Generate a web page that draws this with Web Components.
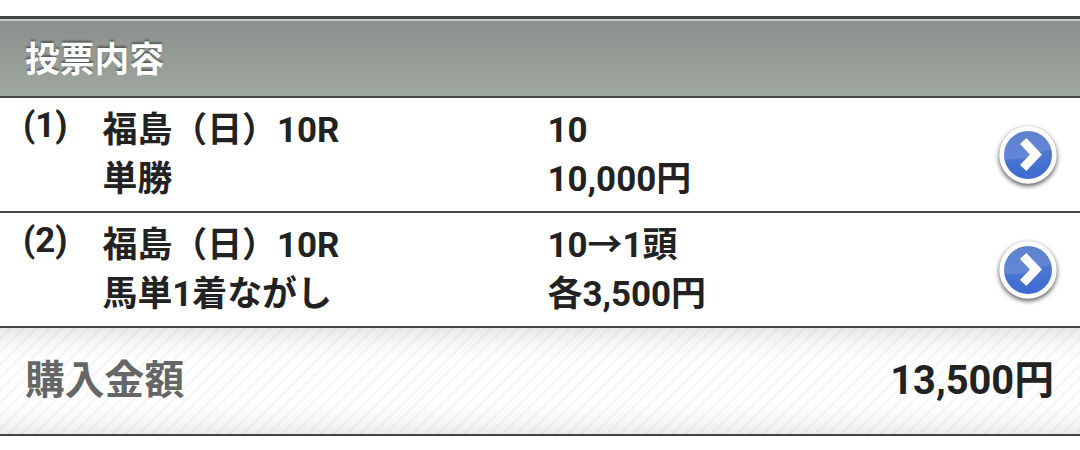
<!DOCTYPE html>
<html lang="ja">
<head>
<meta charset="utf-8">
<title>投票内容</title>
<style>
  body {
    margin: 0;
    padding-top: 16px;
    background: #fff;
    color: #222;
    font-family: Roboto, "Noto Sans CJK JP", sans-serif;
    font-weight: 700;
  }
</style>
</head>
<body>
<section-title>投票内容</section-title>
<bet-row number="(1)">
  <span slot="race">福島（日）10R</span>
  <span slot="type">単勝</span>
  <span slot="pick">10</span>
  <span slot="amount">10,000円</span>
</bet-row>
<bet-row number="(2)">
  <span slot="race">福島（日）10R</span>
  <span slot="type">馬単1着ながし</span>
  <span slot="pick">10→1頭</span>
  <span slot="amount">各3,500円</span>
</bet-row>
<total-bar label="購入金額">13,500円</total-bar>

<script>
class SectionTitle extends HTMLElement {
  constructor() {
    super();
    this.attachShadow({ mode: 'open' });
  }

  connectedCallback() {
    this.shadowRoot.innerHTML = `
      <style>
        :host {
          display: block;
          box-sizing: border-box;
          height: 82px;
          padding: 0 25px;
          border-top: 3px solid #444;
          border-bottom: 2px solid #444;
          background: linear-gradient(#c8cdca 2px, #8a918c 2px, #9fa7a1);
          font-size: 34.8px;
          line-height: 82px;
          color: #fff;
          text-shadow: 0 -2px 2px rgba(0, 0, 0, 0.4);
        }
      </style>
      <slot></slot>
    `;
  }
}

class ArrowIcon extends HTMLElement {
  constructor() {
    super();
    this.attachShadow({ mode: 'open' });
  }

  connectedCallback() {
    this.shadowRoot.innerHTML = `
      <style>
        :host {
          display: block;
          width: 70px;
          height: 70px;
        }

        svg {
          display: block;
        }

        .ring {
          filter: drop-shadow(0 2px 2.5px rgba(0, 0, 0, 0.7));
        }
      </style>
      <svg width="70" height="70" viewBox="0 0 70 70">
        <defs>
          <linearGradient id="base" x1="0" y1="0" x2="0" y2="1">
            <stop offset="0" stop-color="#587dcb"/>
            <stop offset="0.5" stop-color="#4c76d0"/>
            <stop offset="1" stop-color="#3d69d2"/>
          </linearGradient>
          <linearGradient id="gloss" x1="0" y1="0" x2="0" y2="1">
            <stop offset="0" stop-color="#fff" stop-opacity="0"/>
            <stop offset="1" stop-color="#fff" stop-opacity="0.14"/>
          </linearGradient>
          <clipPath id="disc"><circle cx="35" cy="35" r="24"/></clipPath>
        </defs>
        <circle class="ring" cx="35" cy="35" r="28.7" fill="#fff"/>
        <circle cx="35" cy="35" r="24" fill="url(#base)"/>
        <path d="M0 0H70V28Q54 29 40 35Q26 41 0 39Z" fill="url(#gloss)" clip-path="url(#disc)"/>
        <path d="M30.2 21L42.9 34.5L30.2 48" fill="none" stroke="#fff" stroke-width="8.8"/>
      </svg>
    `;
  }
}

class BetRow extends HTMLElement {
  constructor() {
    super();
    this.attachShadow({ mode: 'open' });
  }

  connectedCallback() {
    this.shadowRoot.innerHTML = `
      <style>
        :host {
          display: grid;
          grid-template-columns: 79.5px 445px 1fr 70px;
          box-sizing: border-box;
          height: 115px;
          padding: 8px 17px 0 23px;
          border-bottom: 2px solid #444;
          font-size: 34.9px;
          line-height: 49px;
        }

        .number {
          margin-top: -5px;
        }

        .lines {
          display: grid;
          grid-template-rows: 49px 49px;
        }

        arrow-icon {
          margin-top: 14px;
        }
      </style>
      <div class="number">${this.getAttribute('number')}</div>
      <div class="lines"><slot name="race"></slot><slot name="type"></slot></div>
      <div class="lines"><slot name="pick"></slot><slot name="amount"></slot></div>
      <arrow-icon></arrow-icon>
    `;
  }
}

class TotalBar extends HTMLElement {
  constructor() {
    super();
    this.attachShadow({ mode: 'open' });
  }

  connectedCallback() {
    this.shadowRoot.innerHTML = `
      <style>
        :host {
          display: flex;
          justify-content: space-between;
          box-sizing: border-box;
          height: 108px;
          padding: 0 26px 0 25px;
          border-bottom: 2px solid #444;
          background:
            linear-gradient(rgba(0, 0, 0, 0.09), rgba(0, 0, 0, 0.03) 14%, transparent 32%, transparent 70%, rgba(0, 0, 0, 0.03) 88%, rgba(0, 0, 0, 0.08)),
            repeating-linear-gradient(135deg, #fff 0 5.5px, #f6f6f6 7px 8px, #fff 9.2px);
          font-size: 39.8px;
          line-height: 106px;
        }

        .label {
          color: #666;
        }
      </style>
      <span class="label">${this.getAttribute('label')}</span>
      <slot></slot>
    `;
  }
}

customElements.define('section-title', SectionTitle);
customElements.define('arrow-icon', ArrowIcon);
customElements.define('bet-row', BetRow);
customElements.define('total-bar', TotalBar);
</script>
</body>
</html>
